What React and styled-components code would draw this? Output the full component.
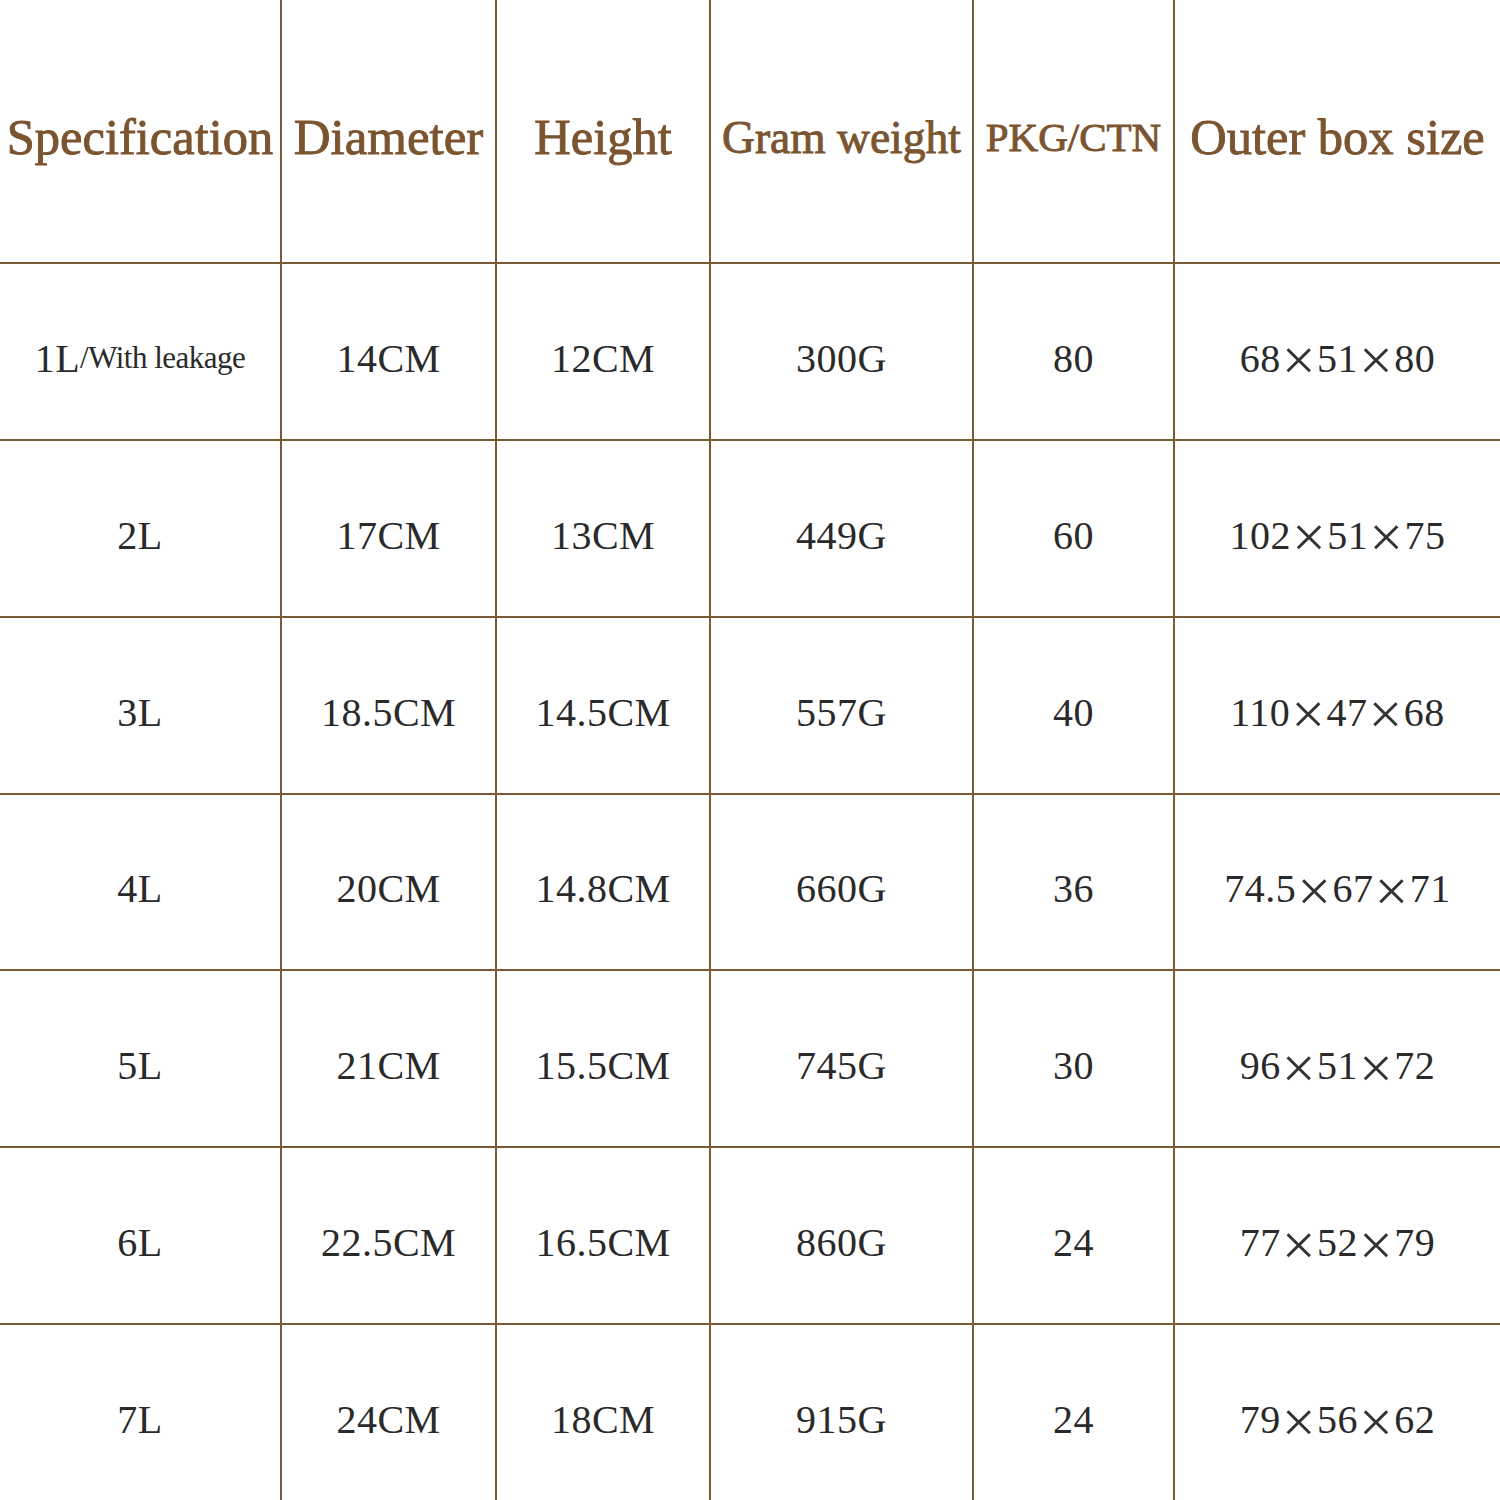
import React from "react";
import styled, { createGlobalStyle } from "styled-components";

const headers = [
  { label: "Specification", size: 50.5 },
  { label: "Diameter", size: 51 },
  { label: "Height", size: 50.5 },
  { label: "Gram weight", size: 45.5 },
  { label: "PKG/CTN", size: 41 },
  { label: "Outer box size", size: 50.5 },
];

const rows = [
  ["1L", "14CM", "12CM", "300G", "80", "68×51×80"],
  ["2L", "17CM", "13CM", "449G", "60", "102×51×75"],
  ["3L", "18.5CM", "14.5CM", "557G", "40", "110×47×68"],
  ["4L", "20CM", "14.8CM", "660G", "36", "74.5×67×71"],
  ["5L", "21CM", "15.5CM", "745G", "30", "96×51×72"],
  ["6L", "22.5CM", "16.5CM", "860G", "24", "77×52×79"],
  ["7L", "24CM", "18CM", "915G", "24", "79×56×62"],
];

const GlobalStyle = createGlobalStyle`
  html, body {
    margin: 0;
    padding: 0;
    background: #fff;
  }
`;

const Table = styled.div`
  width: 1500px;
  height: 1500px;
  display: grid;
  grid-template-columns: 280px 213px 212px 261px 199px 1fr;
  grid-template-rows: 262px repeat(7, 1fr);
  gap: 2px;
  background: #7a5a36;
`;

const HeadCell = styled.div`
  background: #fff;
  display: flex;
  align-items: center;
  justify-content: center;
  padding-top: 12px;
  box-sizing: border-box;
  font-family: "Liberation Serif", "DejaVu Serif", serif;
  font-weight: 400;
  font-size: ${(p) => p.$size}px;
  color: #7b5430;
  -webkit-text-stroke: 0.9px #7b5430;
  white-space: nowrap;
`;

const Cell = styled.div`
  background: #fff;
  display: flex;
  align-items: center;
  justify-content: center;
  padding-top: 14px;
  box-sizing: border-box;
  font-family: "Liberation Serif", "DejaVu Serif", serif;
  font-size: 40px;
  color: #2a2a2a;
  white-space: nowrap;
  letter-spacing: 0.5px;
`;

const Note = styled.span`
  font-size: 31px;
  letter-spacing: -0.5px;
`;

const Times = styled.span`
  font-size: 60px;
  line-height: 0;
  margin: 0 1px;
  color: #333;
  position: relative;
  top: 2px;
`;

const renderValue = (v) =>
  v.split("×").flatMap((part, k) =>
    k === 0 ? [part] : [<Times key={k}>×</Times>, part]
  );

const App = () => {
  return (
    <>
      <GlobalStyle />
      <Table>
        {headers.map((h) => (
          <HeadCell key={h.label} $size={h.size}>
            {h.label}
          </HeadCell>
        ))}
        {rows.map((r, i) =>
          r.map((v, j) => (
            <Cell key={`${i}-${j}`}>
              {renderValue(v)}
              {i === 0 && j === 0 && <Note>/With leakage</Note>}
            </Cell>
          ))
        )}
      </Table>
    </>
  );
};

export default App;
